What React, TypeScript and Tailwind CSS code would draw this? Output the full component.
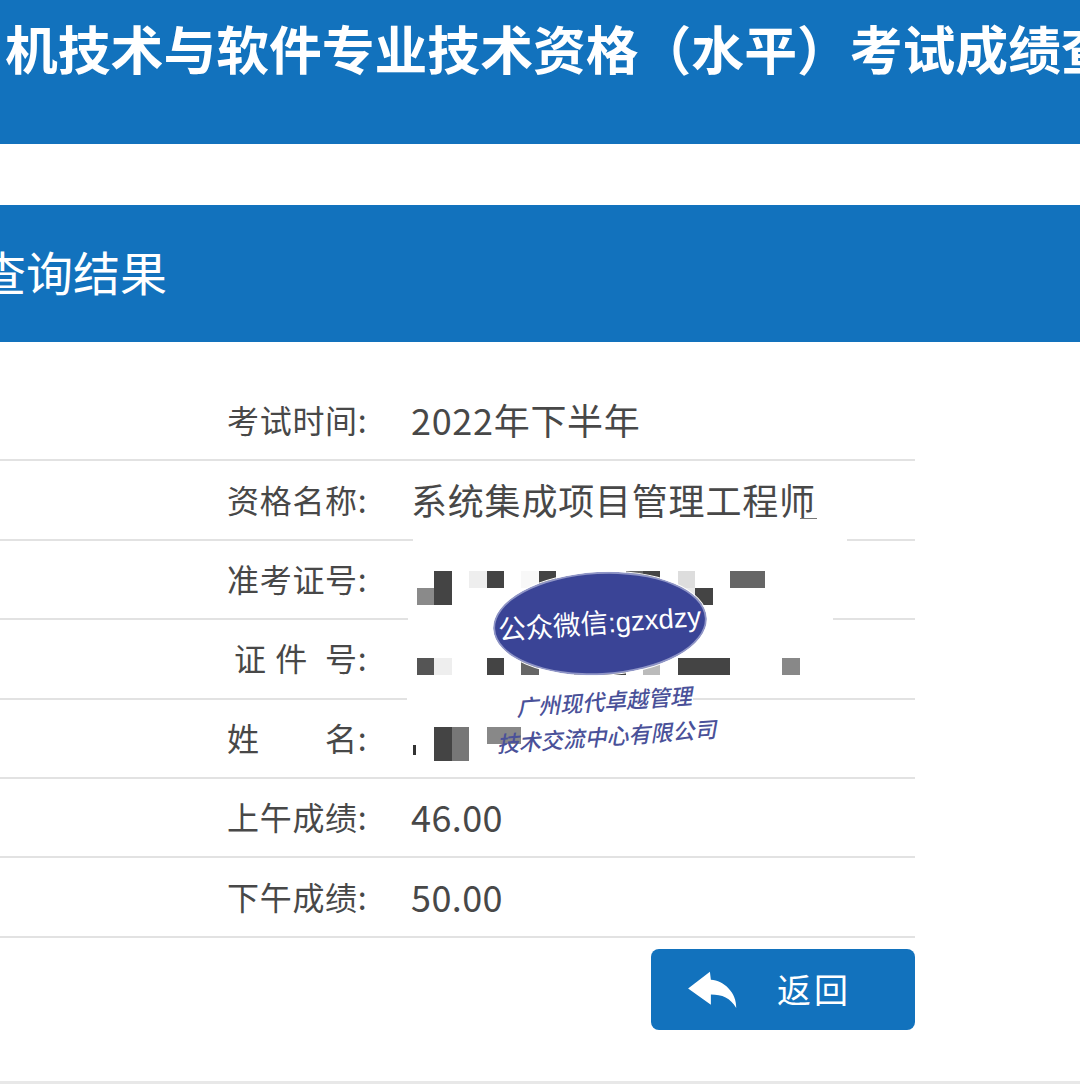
const font = { fontFamily: '"Noto Sans CJK SC", "Noto Sans", sans-serif' };

type Cell = { col: number; row: number; span?: number; rows?: number; color: string };

const C3: Cell[] = [
  { col: 1, row: 2, color: "#8a8a8a" },
  { col: 2, row: 1, rows: 2, color: "#444444" },
  { col: 4, row: 1, color: "#eeeeee" },
  { col: 5, row: 1, color: "#444444" },
  { col: 7, row: 1, color: "#f8f8f8" },
  { col: 8, row: 1, color: "#444444" },
  { col: 13, row: 1, color: "#666666" },
  { col: 14, row: 1, color: "#444444" },
  { col: 16, row: 1, color: "#dddddd" },
  { col: 16, row: 2, color: "#e8e8e8" },
  { col: 17, row: 2, color: "#444444" },
  { col: 19, row: 1, span: 2, color: "#666666" },
];
const C4: Cell[] = [
  { col: 1, row: 1, color: "#555555" },
  { col: 2, row: 1, color: "#eeeeee" },
  { col: 5, row: 1, color: "#444444" },
  { col: 7, row: 1, color: "#666666" },
  { col: 10, row: 1, span: 3, color: "#444444" },
  { col: 14, row: 1, color: "#bbbbbb" },
  { col: 16, row: 1, span: 3, color: "#444444" },
  { col: 22, row: 1, color: "#888888" },
];
const C5: Cell[] = [
  { col: 2, row: 1, rows: 2, color: "#444444" },
  { col: 3, row: 1, rows: 2, color: "#777777" },
  { col: 5, row: 1, span: 2, color: "#888888" },
];

function Mosaic({ cells, className }: { cells: Cell[]; className: string }) {
  return (
    <div className={`relative z-10 ml-[6px] self-start grid grid-cols-[repeat(22,17.4px)] grid-rows-[17.2px_17.2px] ${className}`}>
      {cells.map((c) => (
        <div
          key={`${c.col}-${c.row}`}
          style={{
            gridColumn: `${c.col} / span ${c.span ?? 1}`,
            gridRow: `${c.row} / span ${c.rows ?? 1}`,
            backgroundColor: c.color,
          }}
        />
      ))}
    </div>
  );
}

const rows: { label: string; value?: string; spacing?: string; mosaic?: [Cell[], string] }[] = [
  { label: "考试时间:", value: "2022年下半年", spacing: "tracking-[0.7px]" },
  { label: "资格名称:", value: "系统集成项目管理工程师", spacing: "tracking-[0.8px]" },
  { label: "准考证号:", mosaic: [C3, "mt-[30px]"] },
  { label: "证 件  号:", mosaic: [C4, "mt-[38px]"] },
  { label: "姓       \u200a\u200a名:", mosaic: [C5, "mt-[27px]"] },
  { label: "上午成绩:", value: "46.00", spacing: "tracking-[0.4px]" },
  { label: "下午成绩:", value: "50.00", spacing: "tracking-[0.4px]" },
];

export default function App() {
  return (
    <div className="relative w-[1080px] h-[1085px] overflow-hidden bg-white" style={font}>
      <header className="h-[144px] bg-[#1272bd] pl-[5px] pt-[9px] overflow-hidden">
        <h1 className="whitespace-nowrap text-[52.8px] leading-[76px] font-bold text-white">
          机技术与软件专业技术资格（水平）考试成绩查询
        </h1>
      </header>

      <section className="mt-[61px] h-[137px] pb-[4px] bg-[#1272bd] flex items-center overflow-hidden">
        <h2 className="-ml-[21px] text-[47px] font-normal text-white whitespace-nowrap">查询结果</h2>
      </section>

      <div className="w-[915px] pt-[40px]">
        {rows.map((r) => (
          <div key={r.label} className="h-[79.4px] flex border-b-2 border-[#e2e2e2] text-[#484848]">
            <span className="self-center pb-[3px] w-[411px] pr-[43.6px] text-right text-[32px] tracking-[0.7px] [word-spacing:0.7px] whitespace-pre shrink-0">
              {r.label}
            </span>
            {r.value && (
              <span className={`self-center pb-[3px] text-[36px] whitespace-nowrap ${r.spacing}`}>{r.value}</span>
            )}
            {r.mosaic && <Mosaic cells={r.mosaic[0]} className={r.mosaic[1]} />}
          </div>
        ))}
        <div className="flex justify-end pt-[11px]">
          <button className="w-[264px] h-[81px] rounded-lg bg-[#1272bd] text-white flex items-center pl-[35px]">
            <svg width="53" height="39" viewBox="0 0 160 120" className="shrink-0">
              <path d="M5 57 L72 5 L75 30 C115 32 155 70 153 117 C135 85 110 75 75 75 L75 107 Z" fill="#ffffff" />
            </svg>
            <span className="ml-[38px] pb-[2px] text-[34px] tracking-[3px]">返回</span>
          </button>
        </div>
      </div>

      <div className="absolute left-0 top-[1081px] w-full h-[3px] bg-[#e8e8e8]" />

      {/* white paper of the stamp, over the table */}
      <div className="absolute left-[413px] top-[519px] w-[434px] h-[60px] bg-white" />
      <div className="absolute left-[800px] top-[518px] w-[17px] h-[1px] bg-[#777777]" />
      <div className="absolute left-[408px] top-[579px] w-[425px] h-[60px] bg-white" />
      <div className="absolute left-[407px] top-[680px] w-[286px] h-[40px] bg-white" />
      <div className="absolute z-10 left-[413px] top-[745px] w-[3px] h-[10px] bg-[#333333]" />

      <div
        className="absolute z-20 left-[493px] top-[572px] w-[214px] h-[103px] rounded-[50%] bg-[#3a4496] border-2 border-[#8f95c6] outline outline-1 outline-white -rotate-3 flex items-center justify-center text-white text-[27.5px] whitespace-nowrap"
        style={{ fontFamily: '"Liberation Sans", "Noto Sans CJK SC", sans-serif' }}
      >
        <span className="-rotate-1">公众微信:gzxdzy</span>
      </div>
      <div className="absolute z-20 left-[485px] top-[683px] w-[240px] text-center text-[22px] leading-[35px] font-medium text-[#4a5199] italic whitespace-nowrap -rotate-[4deg]">
        <div>广州现代卓越管理</div>
        <div>技术交流中心有限公司</div>
      </div>
    </div>
  );
}
